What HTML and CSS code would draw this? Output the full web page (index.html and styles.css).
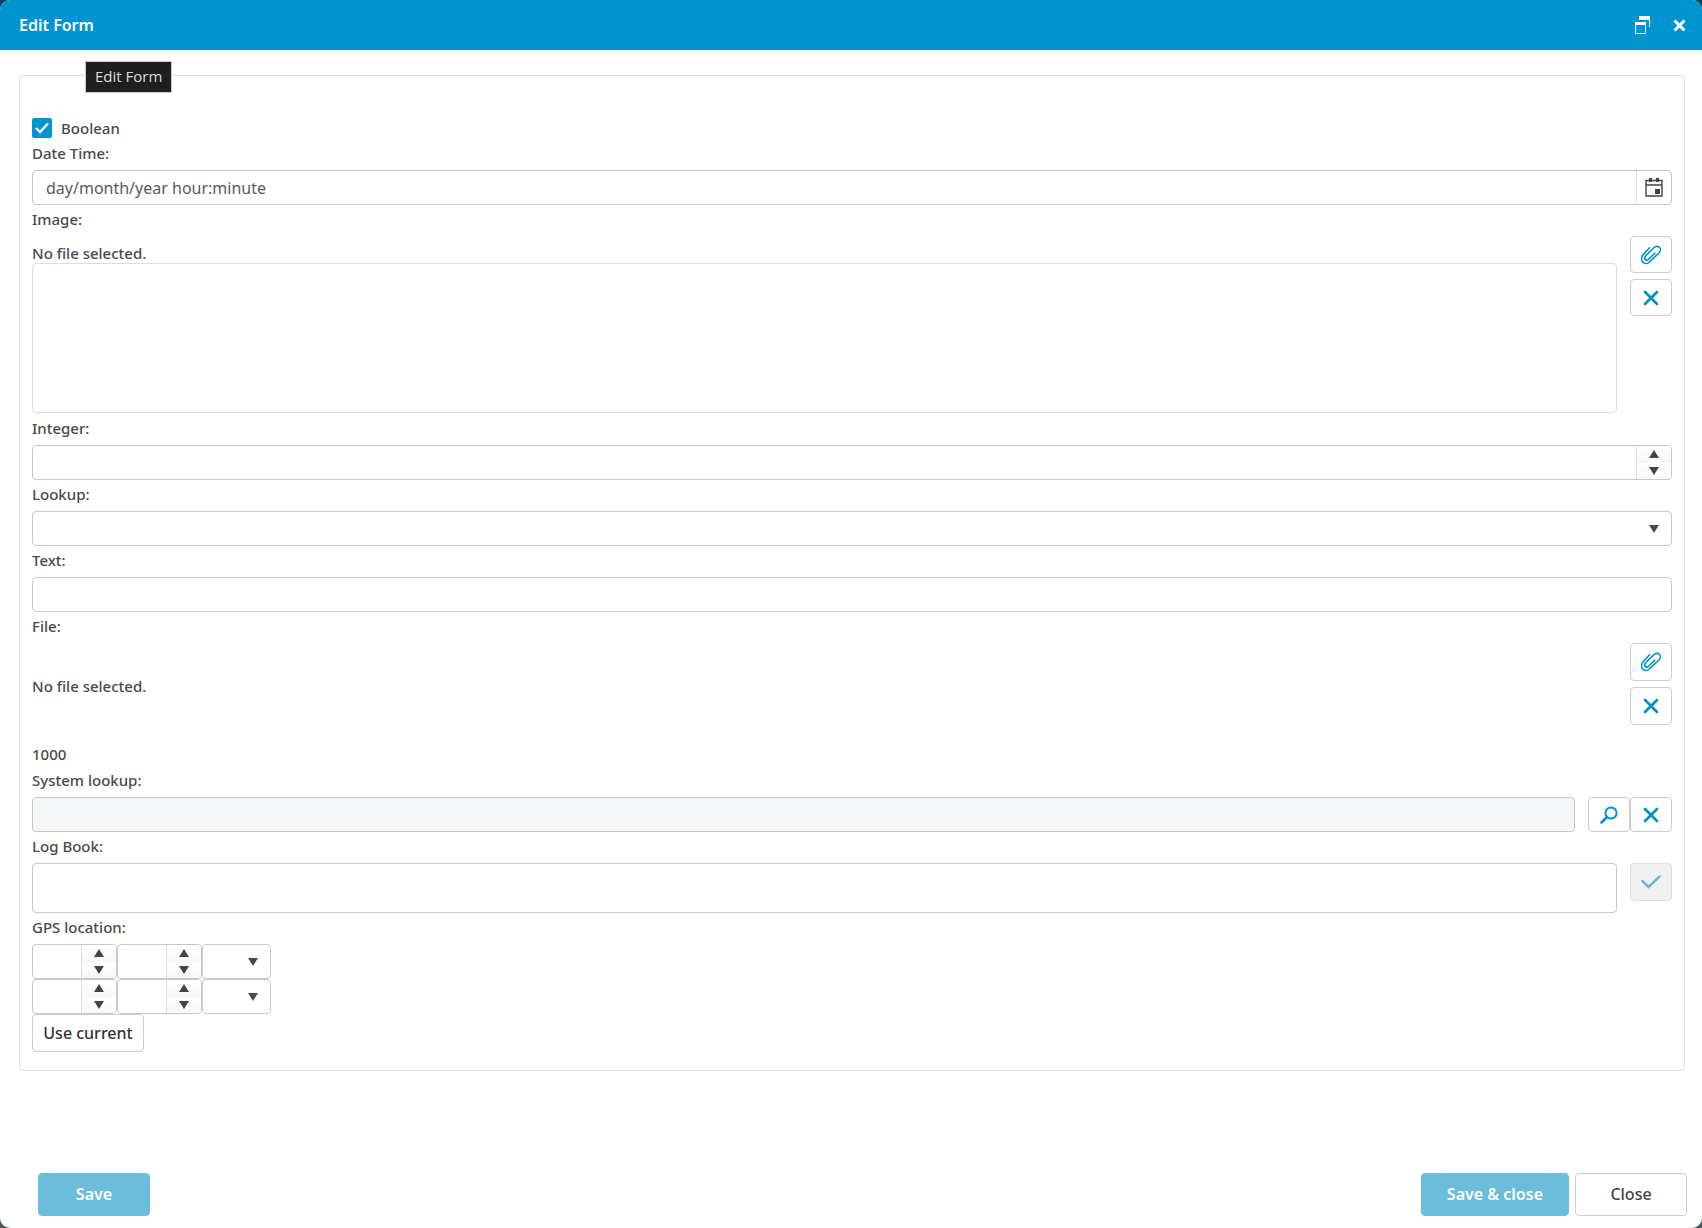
FILE: index.html
```
<!DOCTYPE html>
<html lang="en">
<head>
  <meta charset="UTF-8">
  <title>Edit Form</title>
  <link rel="stylesheet" href="styles.css">
</head>
<body>
  <!-- shared icons -->
  <svg class="sprite" aria-hidden="true">
    <symbol id="i-up" viewBox="0 0 10 8"><path d="M5 0L10 8H0z"/></symbol>
    <symbol id="i-down" viewBox="0 0 10 8"><path d="M0 0H10L5 8z"/></symbol>
    <symbol id="i-x" viewBox="0 0 16 16"><path d="M2 2L14 14M14 2L2 14" fill="none" stroke="currentColor" stroke-width="2.700" stroke-linecap="round"/></symbol>
    <symbol id="i-clip" viewBox="0 0 20 20"><path d="M8.6 2.8L2.3 9.6C-.2 12.500 .2 15.800 2 17.300C3.900 19 6.800 18.600 8.700 16.700L18 8C19.700 6.300 19.800 3.700 18.400 2.300C17 .9 14.500 1.100 12.900 2.700L5 10.400C3.600 11.800 3.300 13.500 4.200 14.400C5.100 15.300 6.800 15 8.100 13.700L13.800 8.200" fill="none" stroke="currentColor" stroke-width="1.600" stroke-linecap="round"/></symbol>
  </svg>

  <div class="dialog">
    <header class="dialog-head">
      <h1>Edit Form</h1>
      <button type="button" class="head-btn" aria-label="Restore">
        <svg width="15" height="18" viewBox="0 0 15 18"><path d="M4 0H15V11H14V4H4z"/><path d="M0 6H11V18H0zM1 9V17H10V9z" fill-rule="evenodd"/></svg>
      </button>
      <button type="button" class="head-btn" aria-label="Close dialog">
        <svg width="13" height="13" viewBox="0 0 13 13"><path d="M1.500 1.500L11.500 11.500M11.500 1.500L1.500 11.500" fill="none" stroke="currentColor" stroke-width="3"/></svg>
      </button>
      <div class="tooltip" role="tooltip">Edit Form</div>
    </header>

    <form class="dialog-body">
      <div class="panel">
        <label class="check"><input type="checkbox" checked><svg width="14" height="12" viewBox="0 0 14 12"><path d="M1 6L5 10L13 1.500" fill="none" stroke="currentColor" stroke-width="2.400"/></svg>Boolean</label>

        <label class="label" for="date">Date Time:</label>
        <div class="field">
          <input type="text" id="date" placeholder="day/month/year hour:minute">
          <button type="button" class="pick" aria-label="Pick a date">
            <svg width="18" height="19" viewBox="0 0 18 19"><path d="M1 2.500H17V18H1zM1 7H17" fill="none" stroke="currentColor" stroke-width="1.400"/><path d="M4 0h3v4H4zM11 0h3v4h-3zM10 11h5v5h-5z"/></svg>
          </button>
        </div>

        <label class="label" for="image">Image:</label>
        <div class="row image-row">
          <div class="grow">
            <p class="note">No file selected.</p>
            <output class="preview" id="image"></output>
          </div>
          <div class="stack">
            <button type="button" class="icon-btn" aria-label="Attach image"><svg class="clip"><use href="#i-clip"/></svg></button>
            <button type="button" class="icon-btn" aria-label="Clear image"><svg><use href="#i-x"/></svg></button>
          </div>
        </div>

        <label class="label" for="integer">Integer:</label>
        <div class="field">
          <input type="number" id="integer">
          <div class="spin">
            <button type="button" aria-label="Increase"><svg class="arrow"><use href="#i-up"/></svg></button>
            <button type="button" aria-label="Decrease"><svg class="arrow"><use href="#i-down"/></svg></button>
          </div>
        </div>

        <label class="label" for="lookup">Lookup:</label>
        <div class="field">
          <select id="lookup"><option></option></select>
          <svg class="arrow drop"><use href="#i-down"/></svg>
        </div>

        <label class="label" for="text">Text:</label>
        <div class="field"><input type="text" id="text"></div>

        <p class="label">File:</p>
        <div class="row file-row">
          <p class="note grow">No file selected.</p>
          <div class="stack">
            <button type="button" class="icon-btn" aria-label="Attach file"><svg class="clip"><use href="#i-clip"/></svg></button>
            <button type="button" class="icon-btn" aria-label="Clear file"><svg><use href="#i-x"/></svg></button>
          </div>
        </div>
        <p class="value">1000</p>

        <label class="label" for="system">System lookup:</label>
        <div class="row">
          <div class="field grow readonly"><input type="text" id="system" readonly></div>
          <div class="pair">
            <button type="button" class="icon-btn" aria-label="Search"><svg class="clip" viewBox="0 0 20 20"><circle cx="12" cy="8" r="5.600" fill="none" stroke="currentColor" stroke-width="2"/><path d="M8 12L2.500 17.500" stroke="currentColor" stroke-width="2.600" stroke-linecap="round"/></svg></button>
            <button type="button" class="icon-btn" aria-label="Clear lookup"><svg><use href="#i-x"/></svg></button>
          </div>
        </div>

        <label class="label" for="log">Log Book:</label>
        <div class="row">
          <textarea class="grow" id="log"></textarea>
          <button type="button" class="icon-btn" aria-label="Add entry" disabled><svg class="clip" viewBox="0 0 20 20"><path d="M1.500 9L7.500 15L18.500 4.500" fill="none" stroke="currentColor" stroke-width="2.400" stroke-linecap="round"/></svg></button>
        </div>

        <p class="label">GPS location:</p>
        <div class="gps">
          <div class="field">
            <input type="number" aria-label="Latitude degrees">
            <div class="spin">
              <button type="button" aria-label="Increase"><svg class="arrow"><use href="#i-up"/></svg></button>
              <button type="button" aria-label="Decrease"><svg class="arrow"><use href="#i-down"/></svg></button>
            </div>
          </div>
          <div class="field">
            <input type="number" aria-label="Latitude minutes">
            <div class="spin">
              <button type="button" aria-label="Increase"><svg class="arrow"><use href="#i-up"/></svg></button>
              <button type="button" aria-label="Decrease"><svg class="arrow"><use href="#i-down"/></svg></button>
            </div>
          </div>
          <div class="field">
            <select aria-label="Latitude direction"><option></option></select>
            <svg class="arrow drop"><use href="#i-down"/></svg>
          </div>
          <div class="field">
            <input type="number" aria-label="Longitude degrees">
            <div class="spin">
              <button type="button" aria-label="Increase"><svg class="arrow"><use href="#i-up"/></svg></button>
              <button type="button" aria-label="Decrease"><svg class="arrow"><use href="#i-down"/></svg></button>
            </div>
          </div>
          <div class="field">
            <input type="number" aria-label="Longitude minutes">
            <div class="spin">
              <button type="button" aria-label="Increase"><svg class="arrow"><use href="#i-up"/></svg></button>
              <button type="button" aria-label="Decrease"><svg class="arrow"><use href="#i-down"/></svg></button>
            </div>
          </div>
          <div class="field">
            <select aria-label="Longitude direction"><option></option></select>
            <svg class="arrow drop"><use href="#i-down"/></svg>
          </div>
        </div>
        <button type="button" class="btn use-current">Use current</button>
      </div>
    </form>

    <footer class="dialog-foot">
      <button type="button" class="btn primary" disabled>Save</button>
      <span class="grow"></span>
      <button type="button" class="btn primary" disabled>Save &amp; close</button>
      <button type="button" class="btn">Close</button>
    </footer>
  </div>
</body>
</html>
```
FILE: styles.css
```
* {
  box-sizing: border-box;
  margin: 0;
  padding: 0;
}
body {
  background: linear-gradient(#06425f, #4b5860);
  color: #4a4a4a;
  font: 500 15px/20px "Noto Sans", "Open Sans", sans-serif;
}
button, input, select, textarea {
  font: inherit;
  color: #444;
  background: none;
  border: 0;
  outline: 0;
}
button {
  display: flex;
  align-items: center;
  justify-content: center;
}
svg {
  fill: currentColor;
}
.sprite {
  display: none;
}
.grow {
  flex: 1;
  min-width: 0;
}

/* dialog */
.dialog {
  display: flex;
  flex-direction: column;
  min-height: 100vh;
  background: #fff;
  border-radius: 10px;
  overflow: hidden;
}
.dialog-head {
  position: relative;
  display: flex;
  align-items: center;
  gap: 23px;
  height: 50px;
  padding: 0 16px 0 19px;
  background: #0095d1;
  color: #fff;
}
.dialog-head h1 {
  flex: 1;
  font-size: 16px;
  font-weight: 600;
}
.head-btn {
  color: #fff;
}
.tooltip {
  position: absolute;
  top: 61px;
  left: 85px;
  padding: 4px 9px 6px;
  border: 1px solid #ccc;
  background: #1f1f1f;
  color: #ddd;
  font-family: "Open Sans", "Noto Sans", sans-serif;
  font-weight: 400;
}
.dialog-body {
  flex: 1;
  padding: 25px 17px 0 19px;
}
.panel {
  padding: 42px 12px 18px;
  border: 1px solid #ddd;
  border-radius: 4px;
}
.dialog-foot {
  display: flex;
  gap: 6px;
  padding: 12px 15px 12px 38px;
}

/* form rows */
.label {
  display: block;
  line-height: 28px;
  padding-bottom: 3px;
}
.row {
  display: flex;
  align-items: flex-start;
  gap: 13px;
}
.field {
  position: relative;
  display: flex;
  height: 35px;
  border: 1px solid #c8c8c8;
  border-radius: 4px;
  background: #fff;
  overflow: hidden;
}
.field input, .field select {
  flex: 1;
  min-width: 0;
  padding: 0 13px;
  font-size: 16px;
  font-weight: 400;
  appearance: none;
}
.field input[type="number"] {
  appearance: textfield;
}
.field input::placeholder {
  color: #5a5a5a;
}
.readonly {
  background: #f5f6f8;
}
.check {
  position: relative;
  display: flex;
  align-items: center;
  gap: 9px;
  height: 20px;
  margin-bottom: 1px;
}
.check input {
  width: 20px;
  height: 20px;
  border: 1px solid #0095d1;
  border-radius: 2px;
  appearance: none;
}
.check input:checked {
  background: #0095d1;
}
.check svg {
  position: absolute;
  left: 3px;
  top: 4px;
  color: #fff;
}
.pick {
  width: 35px;
  border-left: 1px solid #ddd;
}
.spin {
  display: flex;
  flex-direction: column;
  width: 35px;
  border-left: 1px solid #ddd;
}
.spin button {
  flex: 1;
  background: linear-gradient(#fff, #f7f7f7);
}
.arrow {
  width: 10px;
  height: 8px;
}
.drop {
  position: absolute;
  right: 12px;
  top: 13px;
  pointer-events: none;
}
.image-row {
  margin-bottom: 1px;
}
.image-row .note {
  padding-top: 7px;
}
.preview {
  display: block;
  height: 150px;
  border: 1px solid #ddd;
  border-radius: 4px;
}
.stack {
  display: flex;
  flex-direction: column;
  gap: 6px;
}
.pair {
  display: flex;
}
.icon-btn {
  width: 42px;
  height: 38px;
  border: 1px solid #ccc;
  border-radius: 4px;
  color: #0092bc;
}
.image-row .icon-btn {
  height: 37px;
}
.pair .icon-btn {
  height: 35px;
}
.icon-btn svg {
  width: 16px;
  height: 16px;
}
.icon-btn .clip {
  width: 20px;
  height: 20px;
  color: #0095d1;
}
.icon-btn:disabled {
  border-color: #ddd;
  background: #f0f0f0;
}
.icon-btn:disabled .clip {
  color: #56b8d3;
}
.file-row {
  align-items: center;
  padding-bottom: 17px;
}
.file-row .note {
  padding-top: 4px;
}
.value {
  line-height: 24px;
}
textarea {
  height: 50px;
  padding: 6px 13px;
  border: 1px solid #c8c8c8;
  border-radius: 4px;
  resize: none;
}
.gps {
  display: grid;
  grid-template-columns: 85px 85px 69px;
}

/* buttons */
.btn {
  min-width: 112px;
  height: 43px;
  padding: 0 25px 2px;
  border: 1px solid #ccc;
  border-radius: 4px;
  font-size: 16px;
}
.primary {
  border-color: #6cbcdc;
  background: #6cbcdc;
  color: #fff;
  font-weight: 600;
}
.use-current {
  height: 38px;
  padding: 0 10px;
  color: #333;
}
```
